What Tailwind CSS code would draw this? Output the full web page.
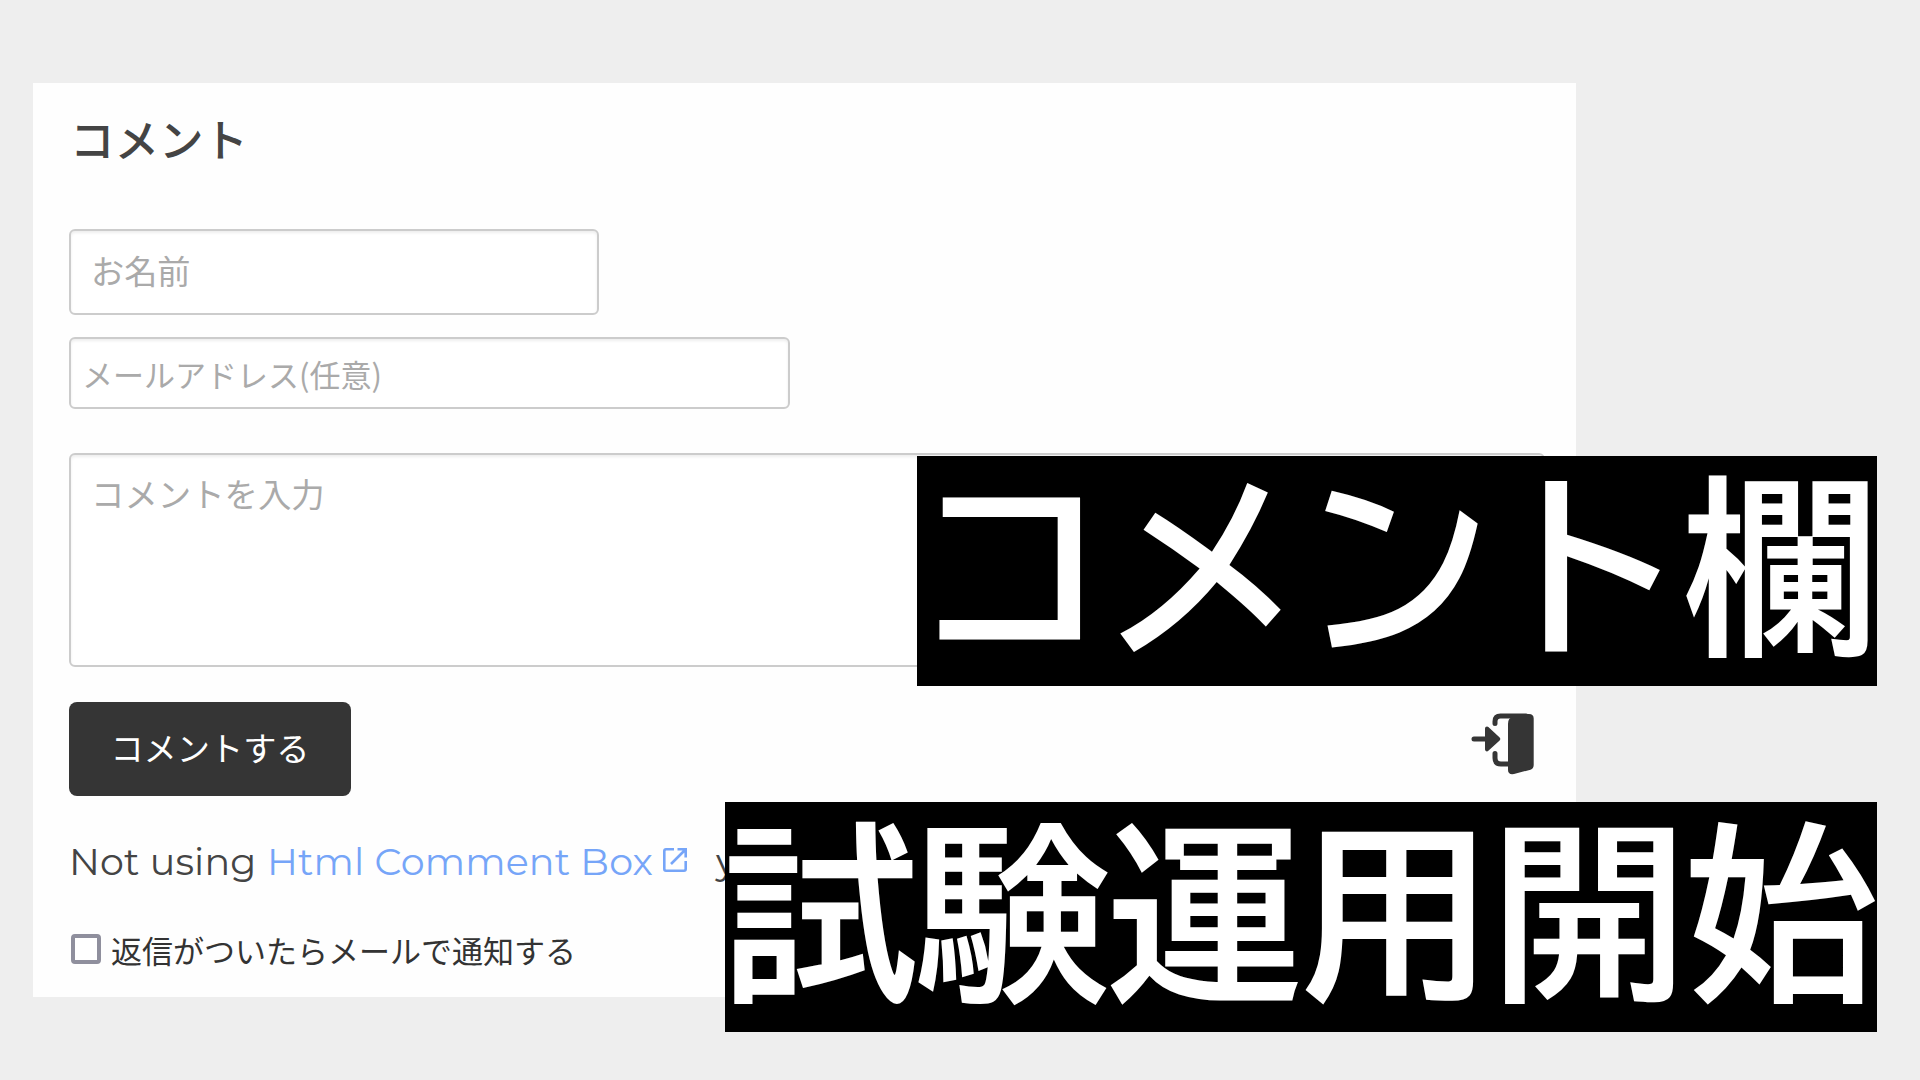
<!DOCTYPE html>
<html lang="ja">
<head>
<meta charset="utf-8">
<title>コメント</title>
<script src="https://cdn.jsdelivr.net/npm/@tailwindcss/browser@4"></script>
</head>
<body class="relative h-[1080px] w-[1920px] overflow-hidden bg-[#eeeeee] pt-[83px] pl-[33px] font-['Noto_Sans_CJK_JP',sans-serif] text-[#333333]">
  <main class="flex h-[914px] w-[1543px] flex-col items-start bg-[#fefefe] pl-[36px]">
    <h1 class="mt-[25px] ml-[1px] h-[60px] text-[44.5px] leading-[60px] font-medium text-[#444444]">コメント</h1>
    <input type="text" placeholder="お名前" class="mt-[61px] h-[86px] w-[530px] rounded-[6px] border-2 border-[#cccccc] bg-white px-[20px] pb-[6px] text-[33.2px] shadow-[inset_0_2px_3px_rgba(0,0,0,0.07)] placeholder:text-[#aaaaaa]">
    <input type="text" placeholder="メールアドレス(任意)" class="mt-[22px] h-[72px] w-[721px] rounded-[6px] border-2 border-[#cccccc] bg-white px-[11px] text-[31px] shadow-[inset_0_2px_3px_rgba(0,0,0,0.07)] placeholder:text-[#aaaaaa]">
    <textarea placeholder="コメントを入力" class="mt-[44px] h-[214px] w-[1476px] resize-none rounded-[6px] border-2 border-[#cccccc] bg-white px-[20px] pt-[14px] text-[33.4px] leading-[48px] shadow-[inset_0_2px_3px_rgba(0,0,0,0.07)] placeholder:text-[#aaaaaa]"></textarea>
    <div class="mt-[35px] flex w-[1467px] items-start justify-between">
      <button class="h-[94px] w-[282px] rounded-[8px] bg-[#353535] pb-[5px] text-[33.2px] text-white">コメントする</button>
      <svg class="mt-[10px] h-[64px] w-[66px]" viewBox="0 0 66 64" fill="none" stroke="#353535" stroke-linecap="round" stroke-linejoin="round">
        <path stroke-width="5" d="M25 11.500V9.500Q25 4 30.500 4H56M25 41.500V46Q25 52 31 52H39M4 27H17"/>
        <path stroke-width="4" d="M17 16.500L28.300 27L17 37.300Z" fill="#353535"/>
        <path d="M43 2H59Q63.700 2 63.700 6.500V53Q63.700 56.500 60.500 57.700L44 62Q38 63 38 58V12Q38 5.500 43 5Z" fill="#353535" stroke="none"/>
      </svg>
    </div>
    <p class="mt-[36px] flex h-[60px] items-center font-['Montserrat','Inter',sans-serif] text-[38px] leading-[60px] whitespace-pre text-[#444444]"><span class="w-[198px] tracking-[0.15px]">Not using</span><a class="w-[395px] tracking-[0.15px] text-[#76a5f8]">Html Comment Box</a><svg class="mr-[28px] mb-[4px] h-[26px] w-[26px]" viewBox="0 0 26 26" fill="none" stroke="#76a5f8" stroke-width="2.600"><path d="M12 2.300H4Q2.300 2.300 2.300 4V22Q2.300 23.700 4 23.700H22Q23.700 23.700 23.700 22V14M15.500 2.300H23.700V10.500M23.500 2.500L9 17"/></svg><span>y</span></p>
    <label class="mt-[30px] ml-[2px] flex h-[54px] items-center text-[31px] leading-[54px]"><span class="mr-[10px] h-[30px] w-[30px] rounded-[4px] border-4 border-[#8f8f9d] bg-white"></span><span class="pt-[1px]">返信がついたらメールで通知する</span></label>
  </main>
  <div class="absolute top-[456px] left-[917px] h-[230px] w-[960px] bg-black font-['BIZ_UDGothic','BIZ_UDPGothic','Noto_Sans_CJK_JP',sans-serif] text-[192px] leading-[222px] font-bold whitespace-nowrap text-white">コメント欄</div>
  <div class="absolute top-[802px] left-[725px] h-[230px] w-[1152px] bg-black font-['BIZ_UDGothic','BIZ_UDPGothic','Noto_Sans_CJK_JP',sans-serif] text-[192px] leading-[222px] font-bold whitespace-nowrap text-white">試験運用開始</div>
</body>
</html>
